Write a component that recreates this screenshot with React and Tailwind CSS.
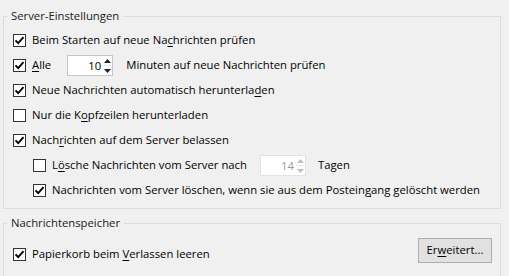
import React from "react";

const font = { fontFamily: '"Open Sans", "Noto Sans", sans-serif' };

function Box({ checked, disabled }) {
  return (
    <span
      className={`w-[13px] h-[13px] shrink-0 flex items-center justify-center border bg-white ${
        disabled ? "border-[#bcbcbc]" : "border-[#333333]"
      }`}
    >
      {checked && (
        <svg width="11" height="11" viewBox="0 0 11 11">
          <path d="M1.5 5.3 L4.2 8.1 L9.5 2.2" fill="none" stroke="#000" strokeWidth="1.9" />
        </svg>
      )}
    </span>
  );
}

// access key underline like the windows dialog
function Key({ text, k }) {
  const i = text.indexOf(k);
  if (i < 0) return text;
  return (
    <>
      {text.slice(0, i)}
      <span className="underline underline-offset-2">{k}</span>
      {text.slice(i + k.length)}
    </>
  );
}

function Check({ label, k, checked, indent, children }) {
  return (
    <div className={`h-[25px] flex items-center ${indent ? "pl-[29px]" : "pl-[9px]"}`}>
      <Box checked={checked} />
      <span className="ml-[6px] whitespace-nowrap">
        <Key text={label} k={k} />
      </span>
      {children}
    </div>
  );
}

function Spin({ value, disabled }) {
  return (
    <div
      className={`w-[46px] h-[21px] flex border bg-white ${
        disabled ? "border-[#e3e3e3]" : "border-[#c5c5c5]"
      }`}
    >
      <div
        className={`flex-1 text-right pr-[2px] leading-[19px] ${
          disabled ? "text-[#9a9a9a]" : "text-black"
        }`}
      >
        {value}
      </div>
      <div className="w-[9px] flex flex-col">
        <div className="flex-1 flex items-center justify-center border-b border-[#e6e6e6]">
          <svg width="7" height="4" viewBox="0 0 7 4">
            <path d="M0 4 L3.5 0 L7 4 Z" fill={disabled ? "#bdbdbd" : "#222"} />
          </svg>
        </div>
        <div className="flex-1 flex items-center justify-center">
          <svg width="7" height="4" viewBox="0 0 7 4">
            <path d="M0 0 L7 0 L3.5 4 Z" fill={disabled ? "#bdbdbd" : "#222"} />
          </svg>
        </div>
      </div>
    </div>
  );
}

export default function App() {
  return (
    <div className="w-[509px] h-[276px] overflow-hidden bg-[#f0f0f0] text-[11.3px] text-black" style={font}>
      <fieldset className="ml-[3px] w-[498px] mt-[8px] border border-[#dcdcdc] pb-[5px]">
        <legend className="ml-[3px] px-[4px] leading-[16px] text-[#1a1a1a]">Server-Einstellungen</legend>
        <div className="pt-[4px] flex flex-col">
          <Check label="Beim Starten auf neue Nachrichten prüfen" k="c" checked />
          <Check label="Alle" k="A" checked>
            <div className="ml-[16px]">
              <Spin value="10" />
            </div>
            <span className="ml-[13px]">Minuten auf neue Nachrichten prüfen</span>
          </Check>
          <div className="h-[25px] flex items-center pl-[9px]">
            <Box checked />
            <span className="ml-[6px]">
              Neue Nachrichten automatisch herunterla<span className="underline underline-offset-2">d</span>en
            </span>
          </div>
          <Check label="Nur die Kopfzeilen herunterladen" k="o" />
          <Check label="Nachrichten auf dem Server belassen" k="r" checked />
          <Check label="Lösche Nachrichten vom Server nach" k="ö" indent>
            <div className="ml-[13px]">
              <Spin value="14" disabled />
            </div>
            <span className="ml-[12px]">Tagen</span>
          </Check>
          <Check label="Nachrichten vom Server löschen, wenn sie aus dem Posteingang gelöscht werden" k="g" checked indent />
        </div>
      </fieldset>
      <fieldset className="ml-[3px] w-[498px] mt-[6px] border border-[#dcdcdc] pb-[20px]">
        <legend className="ml-[3px] px-[4px] leading-[16px] text-[#1a1a1a]">Nachrichtenspeicher</legend>
        <div className="pt-[7px] flex items-start justify-between pr-[8px]">
          <div className="mt-[4px]">
            <Check label="Papierkorb beim Verlassen leeren" k="V" checked />
          </div>
          <button className="w-[74px] h-[25px] bg-[#e1e1e1] border border-[#adadad] text-black">
            Er<span className="underline underline-offset-2">w</span>eitert...
          </button>
        </div>
      </fieldset>
    </div>
  );
}
